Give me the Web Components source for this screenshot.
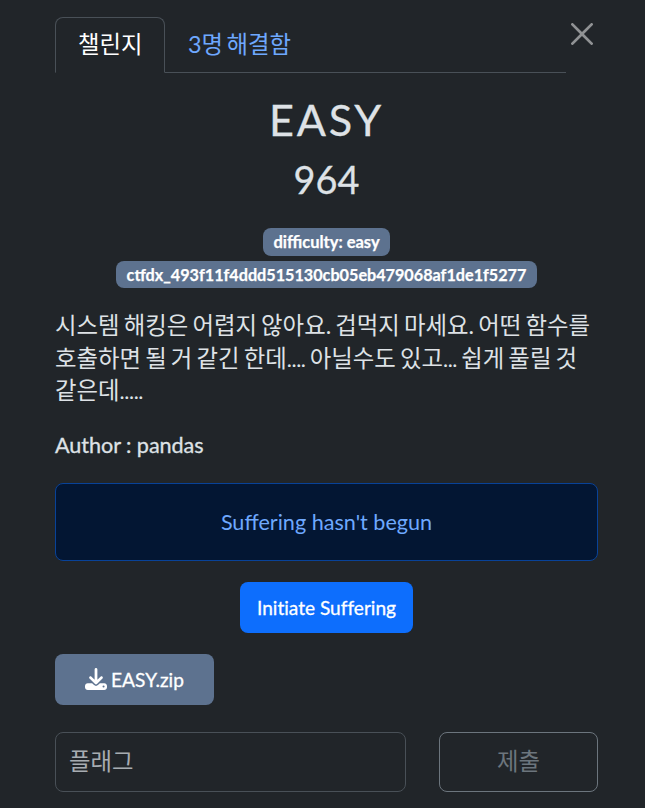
<!DOCTYPE html>
<html lang="ko">
<head>
<meta charset="utf-8">
<title>EASY</title>
<style>
    html { font-size: 21.6px; }
    body {
        margin: 0;
        background: #212529;
        color: #dee2e6;
        font-family: Lato, "Noto Sans CJK KR", sans-serif;
        line-height: 1.5;
    }
</style>
</head>
<body>
<challenge-modal></challenge-modal>

<script>
class ChallengeTabs extends HTMLElement {
    constructor() {
        super();
        const shadow = this.attachShadow({ mode: "open" });
        shadow.innerHTML = `
            <style>
                :host { display: flex; align-items: flex-start; height: 56px; }
                nav {
                    display: flex;
                    box-sizing: border-box;
                    width: 511px;
                    height: 56px;
                    border-bottom: 1px solid #495057;
                }
                a {
                    box-sizing: border-box;
                    height: 56px;
                    padding: 10px 22px;
                    border: 1px solid transparent;
                    color: #6ea8fe;
                    font-size: var(--hangul-size);
                    line-height: 32px;
                    white-space: nowrap;
                    word-spacing: -2.5px;
                }
                a.active {
                    width: 110px;
                    color: #fff;
                    background: #212529;
                    border-color: #495057 #495057 #212529;
                    border-radius: 8px 8px 0 0;
                }
                button {
                    margin: 6px 0 0 5px;
                    padding: 0;
                    border: 0;
                    background: none;
                    line-height: 0;
                }
                svg { width: 22px; height: 22px; fill: #fff; opacity: .5; }
            </style>
            <nav>
                <a class="active">챌린지</a>
                <a>3명 해결함</a>
            </nav>
            <button aria-label="Close">
                <svg viewBox="0 0 16 16"><path d="M.293.293a1 1 0 0 1 1.414 0L8 6.586 14.293.293a1 1 0 1 1 1.414 1.414L9.414 8l6.293 6.293a1 1 0 0 1-1.414 1.414L8 9.414l-6.293 6.293a1 1 0 0 1-1.414-1.414L6.586 8 .293 1.707a1 1 0 0 1 0-1.414z"/></svg>
            </button>
        `;
    }
}

class TagBadge extends HTMLElement {
    constructor() {
        super();
        const shadow = this.attachShadow({ mode: "open" });
        shadow.innerHTML = `
            <style>
                :host {
                    display: block;
                    box-sizing: border-box;
                    height: 27px;
                    padding: 0 10.5px;
                    border-radius: 8px;
                    background: #5d728f;
                    color: #fff;
                    font-size: 16.2px;
                    font-weight: 700;
                    line-height: 27px;
                    white-space: nowrap;
                    -webkit-text-stroke: .25px;
                }
            </style>
            <slot></slot>
        `;
    }
}

class ActionButton extends HTMLElement {
    constructor() {
        super();
        const shadow = this.attachShadow({ mode: "open" });
        shadow.innerHTML = `
            <style>
                :host { display: block; }
                button {
                    display: flex;
                    align-items: center;
                    justify-content: center;
                    box-sizing: border-box;
                    width: 100%;
                    height: 51px;
                    padding: 2px 0 0;
                    border: 0;
                    border-radius: 8px;
                    background: #5d728f;
                    color: #fff;
                    font: inherit;
                    font-size: 19.1px;
                    font-variant-ligatures: none;
                    white-space: nowrap;
                    -webkit-text-stroke: .3px;
                }
                :host([kind="primary"]) button { background: #0d6efd; }
                :host([kind="outline"]) button {
                    height: 60px;
                    padding: 0;
                    border: 1px solid #6c757d;
                    background: none;
                    color: #6c757d;
                    font-size: var(--hangul-size);
                    -webkit-text-stroke: 0;
                }
            </style>
            <button><slot></slot></button>
        `;
    }
}

class StatusAlert extends HTMLElement {
    constructor() {
        super();
        const shadow = this.attachShadow({ mode: "open" });
        shadow.innerHTML = `
            <style>
                :host {
                    display: block;
                    box-sizing: border-box;
                    height: 78px;
                    border: 1px solid #084298;
                    border-radius: 8px;
                    background: #031633;
                    color: #6ea8fe;
                    line-height: 76px;
                    text-align: center;
                }
            </style>
            <slot></slot>
        `;
    }
}

class FlagForm extends HTMLElement {
    constructor() {
        super();
        const shadow = this.attachShadow({ mode: "open" });
        shadow.innerHTML = `
            <style>
                :host { display: grid; grid-template-columns: 351px 159px; gap: 33px; }
                input {
                    box-sizing: border-box;
                    width: 100%;
                    height: 60px;
                    padding: 0 13px 2px;
                    border: 1px solid #495057;
                    border-radius: 8px;
                    background: #212529;
                    color: #dee2e6;
                    font: inherit;
                    font-size: var(--hangul-size);
                }
                input::placeholder { color: #a7acb1; }
            </style>
            <input type="text" placeholder="플래그">
            <action-button kind="outline">제출</action-button>
        `;
    }
}

class ChallengeModal extends HTMLElement {
    constructor() {
        super();
        const shadow = this.attachShadow({ mode: "open" });
        shadow.innerHTML = `
            <style>
                :host {
                    --hangul-size: 23.4px;
                    display: block;
                    box-sizing: border-box;
                    height: 808px;
                    padding: 17px 47px 0 55px;
                    overflow: hidden;
                }
                h2, h3, p { margin: 0; font-weight: 400; }
                h2, h3 { text-align: center; line-height: 1.2; }
                h2, h3 { -webkit-text-stroke: .3px; }
                h2 { margin-top: 21px; font-size: 43.2px; letter-spacing: 2.8px; }
                h3 { margin-top: 11px; font-size: 37.8px; }
                .tags {
                    display: flex;
                    flex-direction: column;
                    align-items: center;
                    gap: 5px;
                    margin-top: 26px;
                }
                .tags tag-badge:first-child { height: 28px; font-size: 16.5px; line-height: 29px; }
                .desc {
                    margin-top: 21px;
                    font-size: var(--hangul-size);
                    line-height: 32.4px;
                    white-space: nowrap;
                    word-spacing: -1.85px;
                }
                .dots { font-size: 1rem; line-height: 0; letter-spacing: -.4px; }
                .author {
                    margin: 22px 0 21px;
                    padding-top: 1px;
                    line-height: 32.4px;
                    letter-spacing: -.05px;
                    -webkit-text-stroke: .3px;
                }
                .start { width: 173px; margin: 21px auto; }
                .file { width: 159px; margin-bottom: 27px; }
                .file svg { width: 22px; height: 22px; margin: -3px 4px 0 0; fill: #fff; }
                .file span { padding-top: 1px; }
            </style>
            <challenge-tabs></challenge-tabs>
            <h2>EASY</h2>
            <h3>964</h3>
            <div class="tags">
                <tag-badge>difficulty: easy</tag-badge>
                <tag-badge>ctfdx_493f11f4ddd515130cb05eb479068af1de1f5277</tag-badge>
            </div>
            <p class="desc">시스템 해킹은 어렵지 않아요. 겁먹지 마세요. 어떤 함수를<br>호출하면 될 거 같긴 한데<span class="dots">....</span> 아닐수도 있고<span class="dots">...</span> 쉽게 풀릴 것<br>같은데<span class="dots">.....</span></p>
            <p class="author">Author : pandas</p>
            <status-alert>Suffering hasn't begun</status-alert>
            <action-button class="start" kind="primary">Initiate Suffering</action-button>
            <action-button class="file">
                <svg viewBox="0 0 512 512"><path d="M288 32c0-17.700-14.300-32-32-32s-32 14.300-32 32v242.700l-73.400-73.400c-12.500-12.500-32.800-12.500-45.300 0s-12.500 32.800 0 45.300l128 128c12.500 12.500 32.800 12.500 45.300 0l128-128c12.500-12.500 12.500-32.800 0-45.300s-32.800-12.500-45.300 0L288 274.700V32zM64 352c-35.300 0-64 28.700-64 64v32c0 35.300 28.700 64 64 64h384c35.300 0 64-28.700 64-64v-32c0-35.300-28.700-64-64-64H346.500l-45.300 45.300c-25 25-65.500 25-90.500 0L165.500 352H64zm368 56a24 24 0 1 1 0 48 24 24 0 1 1 0-48z"/></svg><span>EASY.zip</span>
            </action-button>
            <flag-form></flag-form>
        `;
    }
}

customElements.define("challenge-tabs", ChallengeTabs);
customElements.define("tag-badge", TagBadge);
customElements.define("action-button", ActionButton);
customElements.define("status-alert", StatusAlert);
customElements.define("flag-form", FlagForm);
customElements.define("challenge-modal", ChallengeModal);
</script>
</body>
</html>
